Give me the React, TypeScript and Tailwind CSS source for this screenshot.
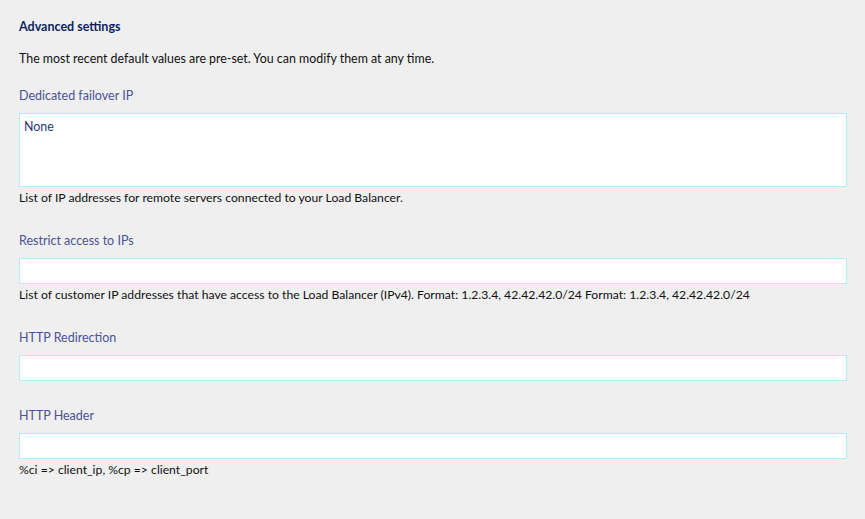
const font = { fontFamily: '"Lato", "Open Sans", sans-serif' };

const Field = ({ label, help, tall, value }: { label: string; help?: string; tall?: boolean; value?: string }) => (
  <div className="flex flex-col">
    <label className="text-[12.5px] leading-[16px] text-[#4b5296]">{label}</label>
    <div
      className={`mt-[9px] w-full border border-[#b3ecfb] bg-white px-[4px] text-[12.4px] leading-[16px] text-[#2b3272] ${
        tall ? 'h-[74px] pt-[5px]' : 'h-[26px]'
      }`}
    >
      {value}
    </div>
    {help ? <p className="mt-[3px] text-[12.2px] leading-[16px] text-[#111]">{help}</p> : null}
  </div>
);

export default function App() {
  return (
    <div className="h-[519px] w-[865px] bg-[#efefef] pl-[19px] pr-[18px] pt-[19px]" style={font}>
      <h2 className="text-[12.5px] font-bold leading-[16px] text-[#0c1f5c]">Advanced settings</h2>
      <p className="mt-[16px] text-[12.4px] leading-[16px] text-[#111]">
        The most recent default values are pre-set. You can modify them at any time.
      </p>
      <div className="mt-[21px] flex flex-col gap-[27px]">
        <Field
          label="Dedicated failover IP"
          tall
          value="None"
          help="List of IP addresses for remote servers connected to your Load Balancer."
        />
        <Field
          label="Restrict access to IPs"
          help="List of customer IP addresses that have access to the Load Balancer (IPv4). Format: 1.2.3.4, 42.42.42.0/24 Format: 1.2.3.4, 42.42.42.0/24"
        />
        <Field label="HTTP Redirection" />
        <Field label="HTTP Header" help="%ci => client_ip, %cp => client_port" />
      </div>
    </div>
  );
}
